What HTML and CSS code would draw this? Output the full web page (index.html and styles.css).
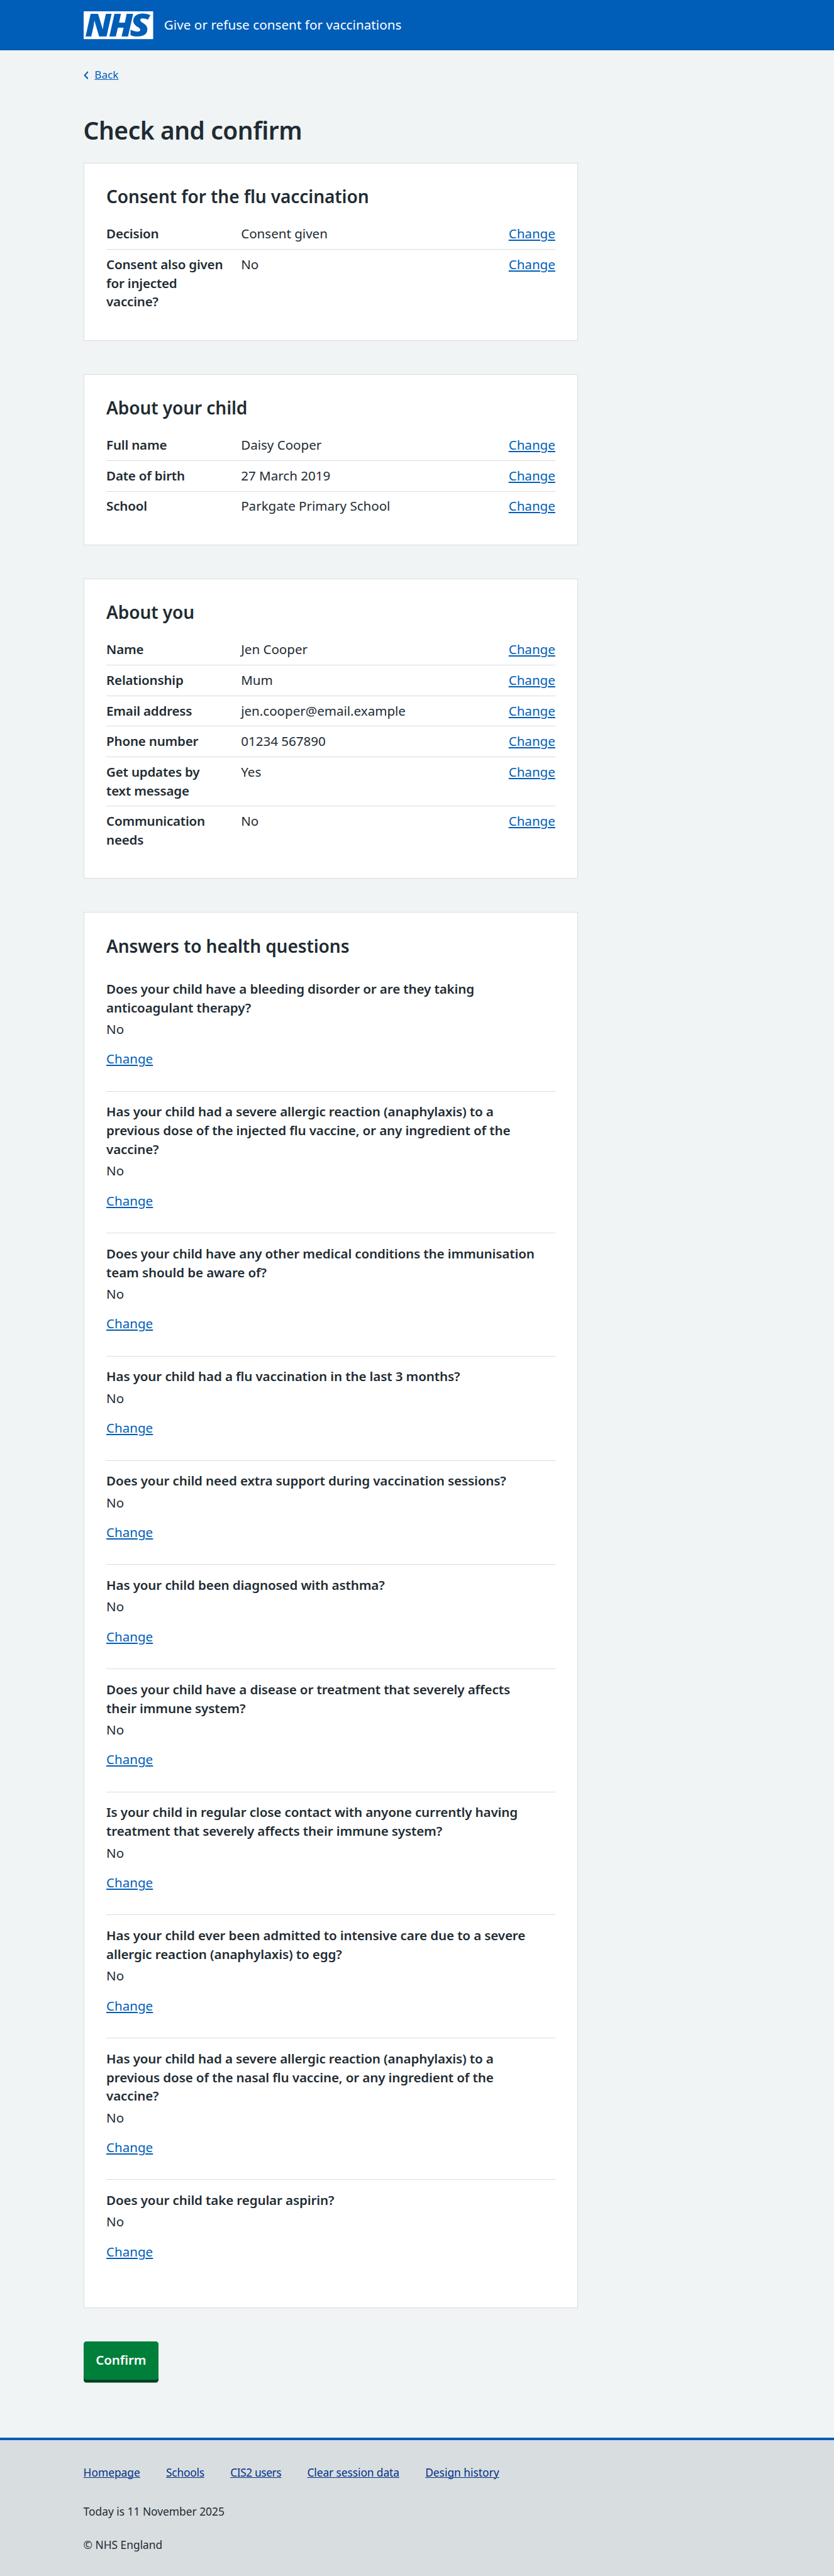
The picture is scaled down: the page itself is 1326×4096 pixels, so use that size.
FILE: index.html
```html
<!DOCTYPE html>
<html lang="en">
<head>
<meta charset="utf-8">
<title>Check and confirm</title>
<link rel="stylesheet" href="styles.css">
</head>
<body>
<header class="header">
  <div class="container header-inner">
    <svg class="logo" viewBox="0 0 200 80" role="img" aria-label="NHS"><rect width="200" height="80" fill="#fff"/><text class="logo-text" transform="translate(4.1 72) scale(1.054 1)">N</text><text class="logo-text" transform="translate(72.2 72) scale(1.07 1)">H</text><text class="logo-text" transform="translate(132.7 72) scale(1.17 1)">S</text></svg>
    <span class="service">Give or refuse consent for vaccinations</span>
  </div>
</header>
<div class="container main">
  <a class="back" href="#"><svg class="chevron" viewBox="0 0 7 12"><path d="M6.3 .8 1.5 6l4.8 5.2" fill="none" stroke="currentColor" stroke-width="1.9"/></svg><span class="back-text">Back</span></a>
  <h1 class="title">Check and confirm</h1>

  <section class="card">
    <h2 class="card-title">Consent for the flu vaccination</h2>
    <dl class="list">
      <div class="row"><dt>Decision</dt><dd>Consent given</dd><dd class="action"><a href="#">Change</a></dd></div>
      <div class="row"><dt>Consent also given<br>for injected<br>vaccine?</dt><dd>No</dd><dd class="action"><a href="#">Change</a></dd></div>
    </dl>
  </section>

  <section class="card">
    <h2 class="card-title">About your child</h2>
    <dl class="list">
      <div class="row"><dt>Full name</dt><dd>Daisy Cooper</dd><dd class="action"><a href="#">Change</a></dd></div>
      <div class="row"><dt>Date of birth</dt><dd>27 March 2019</dd><dd class="action"><a href="#">Change</a></dd></div>
      <div class="row"><dt>School</dt><dd>Parkgate Primary School</dd><dd class="action"><a href="#">Change</a></dd></div>
    </dl>
  </section>

  <section class="card">
    <h2 class="card-title">About you</h2>
    <dl class="list">
      <div class="row"><dt>Name</dt><dd>Jen Cooper</dd><dd class="action"><a href="#">Change</a></dd></div>
      <div class="row"><dt>Relationship</dt><dd>Mum</dd><dd class="action"><a href="#">Change</a></dd></div>
      <div class="row"><dt>Email address</dt><dd>jen.cooper@email.example</dd><dd class="action"><a href="#">Change</a></dd></div>
      <div class="row"><dt>Phone number</dt><dd>01234 567890</dd><dd class="action"><a href="#">Change</a></dd></div>
      <div class="row"><dt>Get updates by<br>text message</dt><dd>Yes</dd><dd class="action"><a href="#">Change</a></dd></div>
      <div class="row"><dt>Communication<br>needs</dt><dd>No</dd><dd class="action"><a href="#">Change</a></dd></div>
    </dl>
  </section>

  <section class="card">
    <h2 class="card-title">Answers to health questions</h2>
    <dl class="list stacked">
      <div class="row"><dt>Does your child have a bleeding disorder or are they taking<br>anticoagulant therapy?</dt><dd>No</dd><dd class="action"><a href="#">Change</a></dd></div>
      <div class="row"><dt>Has your child had a severe allergic reaction (anaphylaxis) to a<br>previous dose of the injected flu vaccine, or any ingredient of the<br>vaccine?</dt><dd>No</dd><dd class="action"><a href="#">Change</a></dd></div>
      <div class="row"><dt>Does your child have any other medical conditions the immunisation<br>team should be aware of?</dt><dd>No</dd><dd class="action"><a href="#">Change</a></dd></div>
      <div class="row"><dt>Has your child had a flu vaccination in the last 3 months?</dt><dd>No</dd><dd class="action"><a href="#">Change</a></dd></div>
      <div class="row"><dt>Does your child need extra support during vaccination sessions?</dt><dd>No</dd><dd class="action"><a href="#">Change</a></dd></div>
      <div class="row"><dt>Has your child been diagnosed with asthma?</dt><dd>No</dd><dd class="action"><a href="#">Change</a></dd></div>
      <div class="row"><dt>Does your child have a disease or treatment that severely affects<br>their immune system?</dt><dd>No</dd><dd class="action"><a href="#">Change</a></dd></div>
      <div class="row"><dt>Is your child in regular close contact with anyone currently having<br>treatment that severely affects their immune system?</dt><dd>No</dd><dd class="action"><a href="#">Change</a></dd></div>
      <div class="row"><dt>Has your child ever been admitted to intensive care due to a severe<br>allergic reaction (anaphylaxis) to egg?</dt><dd>No</dd><dd class="action"><a href="#">Change</a></dd></div>
      <div class="row"><dt>Has your child had a severe allergic reaction (anaphylaxis) to a<br>previous dose of the nasal flu vaccine, or any ingredient of the<br>vaccine?</dt><dd>No</dd><dd class="action"><a href="#">Change</a></dd></div>
      <div class="row"><dt>Does your child take regular aspirin?</dt><dd>No</dd><dd class="action"><a href="#">Change</a></dd></div>
    </dl>
  </section>

  <button class="button" type="button">Confirm</button>
</div>
<footer class="footer">
  <div class="container">
    <nav class="footer-links"><a href="#">Homepage</a><a href="#">Schools</a><a href="#">CIS2 users</a><a href="#">Clear session data</a><a href="#">Design history</a></nav>
    <p class="footer-note">Today is 11 November 2025</p>
    <p class="footer-note">© NHS England</p>
  </div>
</footer>
</body>
</html>
```

FILE: styles.css
```css
/* 1rem = 10 design pixels */
html { font-size: 11.0525px; }
* { box-sizing: border-box; }
body {
  margin: 0;
  background: #f0f4f5;
  color: #212b32;
  font-family: "Noto Sans", "Open Sans", sans-serif;
  font-size: 1.86rem;
  line-height: 2.7rem;
}
h1, h2, p, dl, dt, dd { margin: 0; }
a { color: #005eb8; text-underline-offset: .15rem; text-decoration-thickness: .15rem; }
.container { width: 95.98rem; margin: 0 auto; }

.header { background: #005eb8; height: 7.2rem; }
.header-inner { display: flex; align-items: center; gap: 1.6rem; height: 100%; color: #fff; }
.logo { display: block; width: 10rem; height: 4rem; overflow: visible; }
.logo-text { font-family: "Open Sans", sans-serif; font-weight: 800; font-style: italic; font-size: 91px; fill: #005eb8; }
.service { letter-spacing: .09px; }

.main { height: 343.5rem; padding-top: 2.4rem; }
.back { display: flex; align-items: center; height: 2.4rem; gap: .9rem; font-size: 1.55rem; text-decoration: none; }
.back-text { text-decoration: underline; text-decoration-thickness: .1rem; text-underline-offset: .13rem; }
.chevron { width: .7rem; height: 1.2rem; }
.title { margin: 4.6rem 0 2.5rem; font-size: 3.52rem; line-height: 4.3rem; font-weight: 600; letter-spacing: -.43px; }

.card {
  width: 71.18rem;
  margin-bottom: 4.8rem;
  padding: calc(3.2rem + .105px);
  background: #fff;
  border: 1px solid #d8dde0;
}
.card-title { margin-bottom: calc(1.6rem + .2px); font-size: 2.54rem; line-height: 3.2rem; font-weight: 600; letter-spacing: -.1px; }
.row {
  display: grid;
  grid-template-columns: 30% 50% 20%;
  padding: .8rem 0 calc(.8rem + .105px);
  border-bottom: 1px solid #d8dde0;
}
.row:last-child { border-bottom-color: transparent; }
dt { font-weight: 600; white-space: nowrap; letter-spacing: -.2px; }
.action { text-align: right; }
.stacked .row { display: block; padding: 1.6rem 0 calc(3.2rem + .135px); }
.stacked .row:last-child { padding-bottom: 3.31rem; }
.stacked dt { margin-bottom: .4rem; letter-spacing: -.11px; }
.stacked .action { margin-top: 1.6rem; text-align: left; }

.button {
  display: block;
  width: 10.8rem;
  height: 5.5rem;
  padding: 0;
  border: 0;
  border-radius: .4rem;
  background: #007f3b;
  box-shadow: 0 .4rem 0 #00401e;
  color: #fff;
  font: 600 1.86rem/2.7rem "Noto Sans", "Open Sans", sans-serif;
  letter-spacing: -.1px;
}

.footer { height: 19.89rem; padding-top: 3.45rem; background: #d8dde0; border-top: .4rem solid #005eb8; font-size: 1.57rem; line-height: 2.4rem; }
.footer-links { display: flex; gap: 3.73rem; margin-bottom: 3.2rem; }
.footer-links a { color: #003087; text-decoration-thickness: .1rem; text-underline-offset: .13rem; }
.footer-links a:nth-child(2) { letter-spacing: -.2px; }
.footer-links a:nth-child(3) { letter-spacing: -.4px; }
.footer-links a:nth-child(4) { letter-spacing: -.08px; }
.footer-note { margin-bottom: 2.4rem; }
```
